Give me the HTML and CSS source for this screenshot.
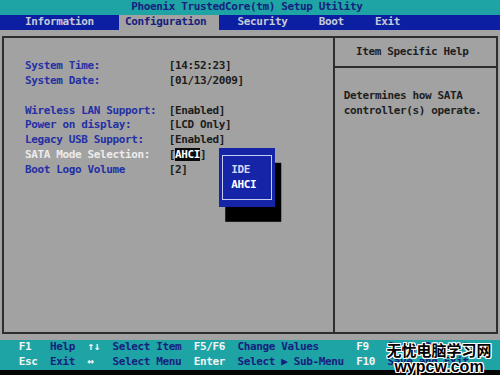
FILE: index.html
```html
<!DOCTYPE html>
<html lang="en">
<head>
  <meta charset="UTF-8" />
  <title>Phoenix TrustedCore Setup Utility</title>
  <link rel="stylesheet" href="styles.css">
</head>
<body>
  <div class="screen">
    <div class="title">Phoenix TrustedCore(tm) Setup Utility</div>

    <div class="menu">
      <span class="tab w15">Information</span>
      <span class="tab w16 active">Configuration</span>
      <span class="tab w13 gap3">Security</span>
      <span class="tab w9">Boot</span>
      <span class="tab">Exit</span>
    </div>

    <div class="main">
      <div class="frame">
        <div class="items">
          <div class="row"><span class="label">System Time:</span><span class="value">[14:52:23]</span></div>
          <div class="row"><span class="label">System Date:</span><span class="value">[01/13/2009]</span></div>
          <div class="row"></div>
          <div class="row"><span class="label">Wireless LAN Support:</span><span class="value">[Enabled]</span></div>
          <div class="row"><span class="label">Power on display:</span><span class="value">[LCD Only]</span></div>
          <div class="row"><span class="label">Legacy USB Support:</span><span class="value">[Enabled]</span></div>
          <div class="row current"><span class="label">SATA Mode Selection:</span><span class="value">[<span class="cursor">AHCI</span>]</span></div>
          <div class="row"><span class="label">Boot Logo Volume</span><span class="value">[2]</span></div>
        </div>
        <div class="help">
          <div class="help-head">Item Specific Help</div>
          <div class="help-body">
            <div class="row">Determines how SATA</div>
            <div class="row">controller(s) operate.</div>
          </div>
        </div>
      </div>
    </div>

    <div class="keys">
      <span class="k">F1</span><span class="d">Help</span><span class="k">↑↓</span><span class="d">Select Item</span><span class="k">F5/F6</span><span class="d">Change Values</span><span class="k">F9</span><span class="d">Setup Defaults</span>
      <span class="k">Esc</span><span class="d">Exit</span><span class="k">↔</span><span class="d">Select Menu</span><span class="k">Enter</span><span class="d">Select ▶ Sub-Menu</span><span class="k">F10</span><span class="d">Save and Exit</span>
    </div>
    <div class="strip"></div>

    <!-- option popup for SATA mode -->
    <div class="popup">
      <div class="opt">IDE</div>
      <div class="opt sel">AHCI</div>
    </div>

    <div class="watermark">
      <div class="wm-cn">无忧电脑学习网</div>
      <div class="wm-en">wypcw.com</div>
    </div>
  </div>
</body>
</html>
```

FILE: styles.css
```css
:root {
  --c: 6.25px;   /* one text cell wide */
  --r: 14.8px;   /* one text row high */
  --teal: #1ea4a4;
  --blue: #0c1ea2;
  --grey: #a2a2a2;
  --navy: #16207e;
}

html, body {
  margin: 0;
  padding: 0;
  background: #000;
}

.screen {
  position: relative;
  width: 500px;
  height: 375px;
  overflow: hidden;
  font-family: "DejaVu Sans Mono", "Liberation Mono", monospace;
  font-size: 11px;
  font-weight: bold;
  letter-spacing: calc(var(--c) - 11px * 0.60205);
  line-height: var(--r);
  white-space: nowrap;
}

.title {
  height: var(--r);
  background: var(--teal);
  color: var(--navy);
  padding-left: calc(21 * var(--c));
}

.menu {
  display: flex;
  height: var(--r);
  background: var(--blue);
  color: #c4ccd8;
  padding-left: calc(4 * var(--c));
}

.tab { display: block; }
.w15 { width: calc(15 * var(--c)); }
.w16 { width: calc(16 * var(--c)); }
.w13 { width: calc(13 * var(--c)); }
.w9  { width: calc(9 * var(--c)); }
.gap3 { margin-left: calc(3 * var(--c)); }

.tab.active {
  background: var(--grey);
  color: var(--navy);
  padding-left: var(--c);
  box-sizing: border-box;
}

.main {
  height: calc(21 * var(--r));
  background: var(--grey);
  padding-top: 6.4px;
  box-sizing: border-box;
}

.frame {
  display: flex;
  margin-left: 2px;
  width: 496px;
  height: 298px;
  border: 2px solid #2e2e2e;
  box-sizing: border-box;
}

.items {
  width: 329px;
  padding: 21.2px 0 0 21px;
  box-sizing: border-box;
  color: #2430a4;
}

.row {
  display: flex;
  height: var(--r);
}

.label { width: calc(23 * var(--c)); }
.value { color: #1c1c1c; }

.row.current .label { color: #ececec; }

.cursor {
  background: #0a0a0a;
  color: #fff;
}

.help {
  flex: 1;
  border-left: 2px solid #2e2e2e;
  color: #1e1e1e;
}

.help-head {
  height: 27.6px;
  line-height: 27.6px;
  padding-left: 21px;
  border-bottom: 2px solid #2e2e2e;
}

.help-body {
  padding: 21.2px 0 0 8.75px;
}

.keys {
  display: grid;
  grid-template-columns:
    calc(5 * var(--c)) calc(6 * var(--c)) calc(4 * var(--c)) calc(13 * var(--c))
    calc(7 * var(--c)) calc(19 * var(--c)) calc(5 * var(--c)) auto;
  grid-auto-rows: var(--r);
  padding-left: calc(3 * var(--c));
  background: var(--teal);
}

.k { color: #f2f6f6; }
.d { color: var(--navy); }

.strip {
  height: 4.6px;
  background: #050505;
}

.popup {
  position: absolute;
  left: calc(35 * var(--c));
  top: calc(10 * var(--r));
  width: calc(9 * var(--c));
  height: calc(4 * var(--r));
  padding: var(--r) 0 0 calc(2 * var(--c));
  box-sizing: border-box;
  background: #1624a8;
  box-shadow: var(--c) var(--r) 0 #000;
}

.popup::before {
  content: "";
  position: absolute;
  inset: 7px 3px 7px 3px;
  border: 1px solid #c8ccf0;
}

.opt {
  height: var(--r);
  color: #d4d8f4;
}

.opt.sel { color: #fff; }

.watermark {
  position: absolute;
  left: 386px;
  top: 341px;
  width: 106px;
  text-align: center;
  letter-spacing: 0;
  color: #000;
  text-shadow:
    1px 0 0 #fff, -1px 0 0 #fff, 0 1px 0 #fff, 0 -1px 0 #fff,
    1px 1px 0 #fff, -1px -1px 0 #fff, 1px -1px 0 #fff, -1px 1px 0 #fff;
}

.wm-cn {
  font-family: "Noto Sans CJK SC", sans-serif;
  font-size: 15px;
  line-height: 18px;
}

.wm-en {
  font-family: "Liberation Sans", Arial, sans-serif;
  font-size: 16px;
  line-height: 15px;
}
```
